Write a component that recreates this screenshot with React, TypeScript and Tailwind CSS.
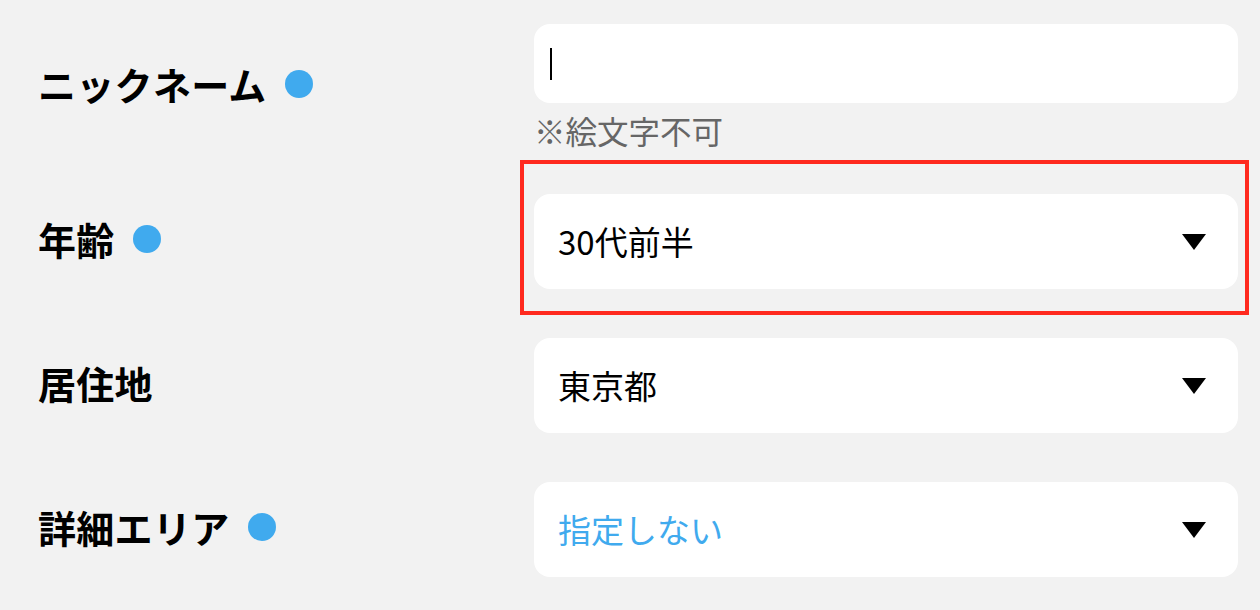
import React from "react";

const jp = { fontFamily: '"Noto Sans CJK JP", "Noto Sans", sans-serif' };

function Dot() {
  return <span className="mb-[6px] ml-[18px] inline-block h-[28px] w-[28px] shrink-0 rounded-full bg-[#40aaee]" />;
}

function Label({ text, required }: { text: string; required?: boolean }) {
  return (
    <div className="flex w-[496px] shrink-0 items-center">
      <span className="mb-[6px] text-[38px] font-bold leading-none tracking-[0.3px] text-black">{text}</span>
      {required && <Dot />}
    </div>
  );
}

function Triangle() {
  return (
    <svg width="24" height="16" viewBox="0 0 24 16" className="shrink-0">
      <polygon points="0,0 24,0 12,16" fill="#000" />
    </svg>
  );
}

function Select({ value, placeholder }: { value: string; placeholder?: boolean }) {
  return (
    <div className="flex h-[95px] w-[704px] items-center justify-between rounded-[16px] bg-white pl-[24px] pr-[32px]">
      <span className={`text-[33px] font-normal leading-none ${placeholder ? "text-[#40aaee]" : "text-black"}`}>{value}</span>
      <Triangle />
    </div>
  );
}

export default function App() {
  return (
    <div style={jp} className="h-[610px] w-[1260px] overflow-hidden bg-[#f2f2f2] pl-[38px] pt-[24px]">
      <div className="flex items-center">
        <Label text="ニックネーム" required />
        <div className="flex flex-col">
          <div className="flex h-[79px] w-[704px] items-center rounded-[16px] bg-white pl-[16px]">
            <div className="h-[32px] w-[2px] bg-black" />
          </div>
          <div className="mt-[7px] h-[40px] text-[31.5px] leading-[40px] text-[#666666]">※絵文字不可</div>
        </div>
      </div>

      <div className="mt-[44px] flex items-center">
        <Label text="年齢" required />
        <div className="relative">
          <Select value="30代前半" />
          <div className="pointer-events-none absolute -left-[14px] -right-[11px] -top-[34px] -bottom-[26px] border-[4px] border-[#ff2a1f]" />
        </div>
      </div>

      <div className="mt-[49px] flex items-center">
        <Label text="居住地" />
        <Select value="東京都" />
      </div>

      <div className="mt-[49px] flex items-center">
        <Label text="詳細エリア" required />
        <Select value="指定しない" placeholder />
      </div>
    </div>
  );
}
